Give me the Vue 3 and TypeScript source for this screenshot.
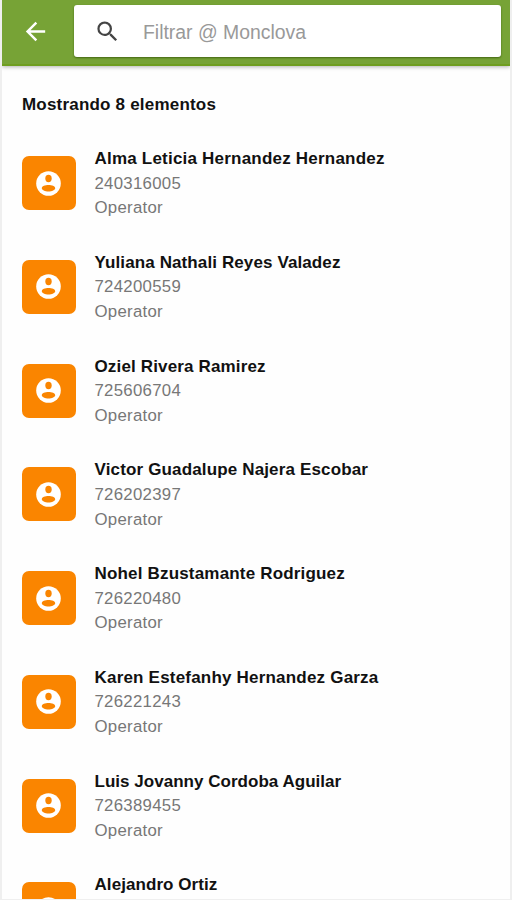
<script setup lang="ts">
interface Person {
  name: string
  tracking: number
  id?: string
  role?: string
}

const people: Person[] = [
  { name: 'Alma Leticia Hernandez Hernandez', tracking: 0.21, id: '240316005', role: 'Operator' },
  { name: 'Yuliana Nathali Reyes Valadez', tracking: 0.11, id: '724200559', role: 'Operator' },
  { name: 'Oziel Rivera Ramirez', tracking: 0.15, id: '725606704', role: 'Operator' },
  { name: 'Victor Guadalupe Najera Escobar', tracking: 0.15, id: '726202397', role: 'Operator' },
  { name: 'Nohel Bzustamante Rodriguez', tracking: 0.18, id: '726220480', role: 'Operator' },
  { name: 'Karen Estefanhy Hernandez Garza', tracking: 0.2, id: '726221243', role: 'Operator' },
  { name: 'Luis Jovanny Cordoba Aguilar', tracking: 0.03, id: '726389455', role: 'Operator' },
  { name: 'Alejandro Ortiz', tracking: 0.07 },
]
</script>

<template>
  <div class="screen">
    <header class="bar">
      <button class="back" aria-label="Atrás">
        <svg viewBox="0 0 24 24"><path d="M20 11H7.83l5.59-5.59L12 4l-8 8 8 8 1.41-1.41L7.83 13H20z" /></svg>
      </button>
      <label class="search">
        <svg viewBox="0 0 24 24"><path d="M15.5 14h-.79l-.28-.27A6.47 6.47 0 0 0 16 9.5 6.5 6.5 0 1 0 9.5 16c1.61 0 3.09-.59 4.23-1.57l.27.28v.79l5 4.99L20.49 19zm-6 0C7.01 14 5 11.99 5 9.5S7.01 5 9.5 5 14 7.01 14 9.5 11.99 14 9.5 14" /></svg>
        <input type="text" placeholder="Filtrar @ Monclova" />
      </label>
    </header>
    <main class="content">
      <h1 class="summary">Mostrando 8 elementos</h1>
      <ul class="list">
        <li v-for="person in people" :key="person.name" class="row">
          <span class="avatar">
            <svg viewBox="0 0 25 25">
              <circle class="disc" cx="12.5" cy="12.5" r="12.3" />
              <ellipse class="figure" cx="12.5" cy="7.5" rx="3.2" ry="3.7" />
              <path class="figure" d="M5.8 17.2C5.8 15 9.200 13.900 12.500 13.900s6.700 1.100 6.700 3.300c0 1.800-3.300 3.400-6.700 3.400s-6.700-1.600-6.700-3.400z" />
            </svg>
          </span>
          <div class="details">
            <p class="name" :style="{ letterSpacing: person.tracking + 'px' }">{{ person.name }}</p>
            <p v-if="person.id" class="meta">{{ person.id }}</p>
            <p v-if="person.role" class="meta">{{ person.role }}</p>
          </div>
        </li>
      </ul>
    </main>
  </div>
</template>

<style>
body {
  overflow: hidden;
}
</style>

<style scoped>
.screen {
  box-sizing: border-box;
  width: 512px;
  height: 900px;
  overflow: hidden;
  border: solid #efefef;
  border-width: 0 2px 1px;
  background: #fefefe;
  font-family: 'Liberation Sans', Arial, sans-serif;
}

.bar {
  box-sizing: border-box;
  display: flex;
  align-items: flex-start;
  height: 66px;
  padding: 5px 9px 0 0;
  background: #77a336;
  border-bottom: 2px solid #6f9e20;
  box-shadow: 0 1px 4px rgba(0, 0, 0, 0.3);
}

.back {
  display: flex;
  align-items: center;
  justify-content: center;
  width: 72px;
  height: 53px;
  padding: 0 5px 0 0;
  border: 0;
  background: none;
}

.back svg {
  width: 29px;
  height: 29px;
  fill: #fff;
}

.search {
  box-sizing: border-box;
  display: flex;
  flex: 1;
  align-items: center;
  height: 52px;
  padding: 1px 0 0 20px;
  border-radius: 3px;
  background: #fff;
  box-shadow: 0 1px 2px rgba(40, 70, 0, 0.65);
}

.search svg {
  flex: none;
  width: 27px;
  height: 27px;
  fill: #444;
}

.search input {
  flex: 1;
  min-width: 0;
  margin-left: 22px;
  padding: 1px 0 0;
  border: 0;
  outline: 0;
  background: none;
  font: 19.4px 'Liberation Sans', Arial, sans-serif;
}

.search input::placeholder {
  color: #999;
  opacity: 1;
}

.content {
  padding: 26px 20px 0;
}

.summary {
  margin: 0;
  font-size: 17px;
  line-height: 25px;
  letter-spacing: 0.2px;
  color: #111;
}

.list {
  margin: 0;
  padding: 29px 0 0;
  list-style: none;
}

.row {
  display: flex;
  gap: 18.5px;
  height: 103.75px;
}

.avatar {
  box-sizing: border-box;
  display: flex;
  flex: none;
  align-items: center;
  justify-content: center;
  width: 54px;
  height: 54px;
  margin-top: 10px;
  padding-right: 2px;
  border-radius: 7px;
  background: #fa8500;
}

.avatar svg {
  width: 25px;
  height: 25px;
}

.disc {
  fill: #fff;
}

.figure {
  fill: #fa8500;
}

.details {
  padding-top: 1px;
}

.name,
.meta {
  margin: 0;
  font-size: 17px;
  line-height: 24.7px;
  white-space: nowrap;
}

.name {
  font-weight: 700;
  color: #111;
}

.meta {
  font-size: 16.8px;
  letter-spacing: 0.28px;
  color: #777;
}
</style>
